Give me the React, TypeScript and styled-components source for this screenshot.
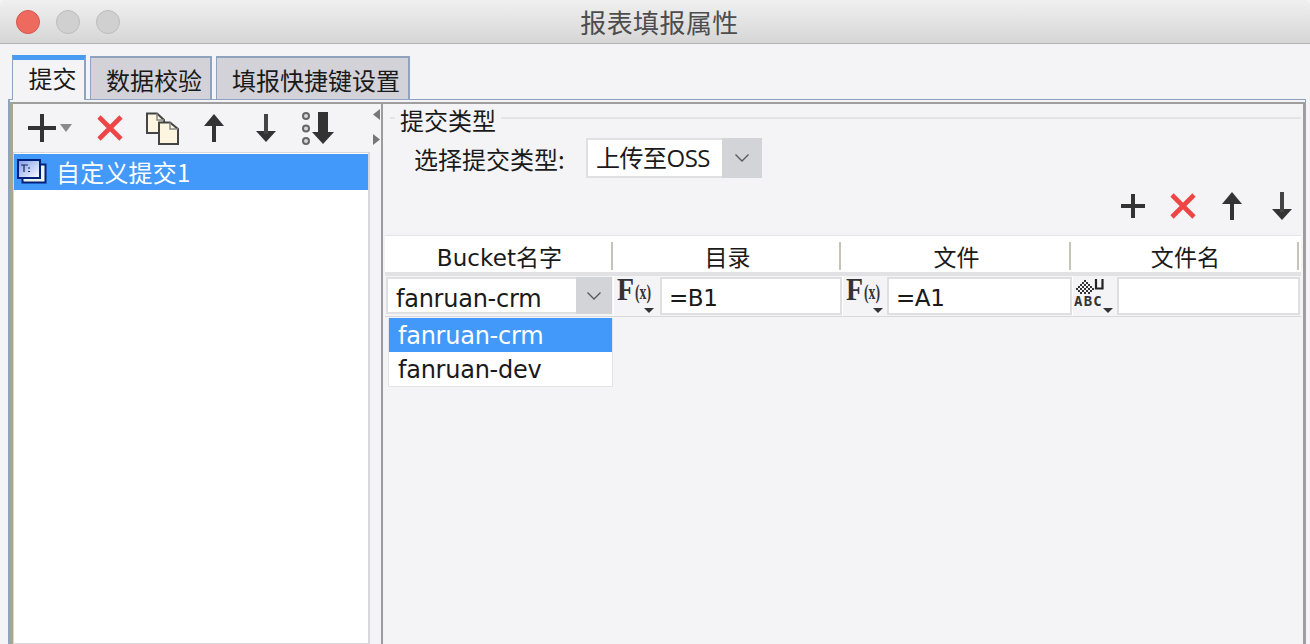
import React from 'react';
import styled, { createGlobalStyle } from 'styled-components';

const Global = createGlobalStyle`
  html, body { margin: 0; padding: 0; background: #f4f4f7; overflow: hidden; }
  * { box-sizing: border-box; }
`;

const FONT = `"DejaVu Sans", "Noto Sans CJK SC", sans-serif`;

const Window = styled.div`
  width: 1310px; height: 644px; display: flex; flex-direction: column; overflow: hidden;
  background: #f4f4f7; font-family: ${FONT}; color: #1a1a1a; font-size: 24px;
`;
const TitleBar = styled.header`
  height: 44px; flex: none; display: grid; grid-template-columns: 1fr auto 1fr; align-items: center;
  background: linear-gradient(#f0f0f0, #d6d6d6); border-bottom: 1px solid #b4b4b4;
  border-radius: 6px 6px 0 0;
`;
const Lights = styled.div`display: flex; gap: 16px; padding-left: 16px;`;
const Light = styled.span<{ $active?: boolean }>`
  width: 24px; height: 24px; border-radius: 50%;
  background: ${p => (p.$active ? '#ee6a5f' : '#d0d0d0')};
  border: 1px solid ${p => (p.$active ? '#d6574d' : '#bcbcbc')};
`;
const Title = styled.h1`
  margin: 0 0 0 9px; font-size: 26px; line-height: 44px; font-weight: 400; color: #4d4d4d; letter-spacing: 0.4px;
  font-family: "Noto Sans CJK SC", sans-serif;
`;
const TabStrip = styled.div`
  flex: none; height: 55px; padding: 11px 0 0 12px; display: flex; gap: 4px; align-items: flex-end;
`;
const Tab = styled.div<{ $active?: boolean; $w: number; $pl: number }>`
  width: ${p => p.$w}px;
  height: ${p => (p.$active ? 45 : 43)}px;
  margin-bottom: ${p => (p.$active ? -1 : 0)}px;
  position: relative; z-index: ${p => (p.$active ? 2 : 0)};
  padding-left: ${p => p.$pl}px;
  background: ${p => (p.$active ? '#f4f4f7' : '#d2d2d8')};
  border: 1px solid #8fa3bf; border-bottom: none;
  border-top: ${p => (p.$active ? '5px solid #4a9bf2' : '2px solid #8fa3bf')};
  border-right-width: 2px;
  text-align: center; line-height: ${p => (p.$active ? 36 : 44)}px; white-space: nowrap;
  font-family: "Noto Sans CJK SC", sans-serif;
`;
const Pane = styled.div`
  flex: 1; min-height: 0; margin: 0 4px 0 8px; border: solid #8fa3bf; border-width: 1px 1px 0 2px;
  padding-top: 2px; display: flex;
`;
const PaneInner = styled.div`
  flex: 1; min-width: 0; display: flex; border: solid #a6a697; border-width: 2px 2px 0 3px;
  border-top-color: #9e9e9e; border-right-color: #9e9e9e;
`;
const LeftPanel = styled.section`
  width: 357px; flex: none; display: flex; flex-direction: column;
`;
const LeftToolbar = styled.div`
  height: 48px; flex: none; display: flex; align-items: center; padding-left: 15px;
`;
const ToolIcon = styled.svg<{ $ml?: number }>`
  display: block; flex: none; margin-left: ${p => p.$ml ?? 0}px;
`;
const List = styled.div`
  flex: 1; background: #fff; border: 1px solid #d8d8dc; border-right-width: 2px; padding-top: 1px;
`;
const ListRow = styled.div`
  height: 36px; background: #4299fa; color: #fff; display: flex; align-items: center; padding: 0 0 2px 3px; gap: 9px;
  font-family: "Noto Sans CJK SC", sans-serif; font-size: 24px; letter-spacing: 0.2px;
`;
const Splitter = styled.div`
  width: 13px; flex: none; border-right: 2px solid #9c9c9c; padding: 5px 0 0 3px;
  display: flex; flex-direction: column; gap: 14px;
`;
const RightPanel = styled.section`
  flex: 1; min-width: 0; display: flex; flex-direction: column; padding-left: 2px;
`;
const Legend = styled.div`
  height: 30px; flex: none; display: flex; align-items: center; margin-left: 5px; margin-right: 2px; gap: 5px;
  font-family: "Noto Sans CJK SC", sans-serif;
`;
const LegendRule = styled.span<{ $w?: number }>`
  height: 2px; background: #e4e4e7; margin-top: -2px;
  ${p => (p.$w ? `width: ${p.$w}px; flex: none;` : 'flex: 1;')}
`;
const TypeRow = styled.div`
  height: 40px; flex: none; margin-top: 4px; display: flex; align-items: center; padding-left: 29px; gap: 21px;
  font-family: "Noto Sans CJK SC", sans-serif;
`;
const TypeLabel = styled.span`width: 151px; flex: none; white-space: nowrap;`;
const Combo = styled.div<{ $w: number }>`
  width: ${p => p.$w}px; height: 100%; display: flex; flex: none;
  background: #fff; border: 2px solid #e0e0e3; border-right: none;
  font-family: ${FONT};
`;
const ComboText = styled.span`
  flex: 1; min-width: 0; padding-left: 8px; white-space: nowrap; line-height: 40px; letter-spacing: -0.25px;
`;
const OssText = styled(ComboText)`
  font-family: "Open Sans", "Noto Sans CJK SC", sans-serif; line-height: 36px; letter-spacing: -0.5px;
`;
const ComboArrow = styled.span<{ $w: number }>`
  width: ${p => p.$w}px; flex: none; background: #d3d4d8; display: flex; align-items: center; justify-content: center;
  margin: -2px 0;
`;
const RightToolbar = styled.div`
  height: 28px; flex: none; margin-top: 14px; display: flex; align-items: center; justify-content: flex-end; padding-right: 11px;
`;
const TableWrap = styled.div`
  margin-top: 15px; margin-right: 2px; position: relative;
`;
const HeaderRow = styled.div`
  height: 37px; display: grid; grid-template-columns: 228px 228px 230px 228px 1fr; background: #fff; border-top: 1px solid #e4e4e7;
`;
const HeadCell = styled.div`
  text-align: center; line-height: 44px; height: 36px; position: relative; font-size: 23px; letter-spacing: 0.1px; padding-left: 1px;
  font-family: ${FONT}; white-space: nowrap;
  &::after {
    content: ''; position: absolute; right: 0; top: 6px; bottom: 2px; width: 2px; background: #c6c4b6;
  }
`;
const HeadEnd = styled.div``;
const Band = styled.div`height: 4px; background: #e2e2e5;`;
const BodyRow = styled.div`
  height: 41px; display: flex; border-bottom: 1px solid #d8d8dc; padding: 0 3px 0 1px;
`;
const BucketCell = styled.div`
  width: 227px; flex: none; position: relative; padding: 1px 0 2px;
`;
const IconCell = styled.div<{ $w: number }>`
  width: ${p => p.$w}px; flex: none; display: flex; border-left: 1px solid #fff;
`;
const FxButton = styled.div<{ $w: number }>`width: ${p => p.$w}px; flex: none; padding: 2px 0 0 1px;`;
const DrawnIcon = styled.svg`display: block; margin-top: -8px; overflow: visible;`;
const ValueInput = styled.div`
  flex: 1; min-width: 0; background: #fff; border: 2px solid #dfdfe2; padding-left: 7px; line-height: 38px; font-size: 23px;
  margin: 1px 0; white-space: nowrap; letter-spacing: -0.4px;
`;
const Dropdown = styled.ul`
  position: absolute; left: 2px; top: 42px; width: 225px; margin: 0; padding: 0; list-style: none;
  background: #fff; border: 1px solid #e4e4e7; border-top: none; z-index: 3; letter-spacing: -0.25px;
`;
const Option = styled.li<{ $on?: boolean }>`
  height: 34px; line-height: 37px; padding-left: 9px;
  background: ${p => (p.$on ? '#4299fa' : 'transparent')};
  color: ${p => (p.$on ? '#fff' : '#1a1a1a')};
`;

const Chevron = () => (
  <svg width="16" height="10" viewBox="0 0 16 10">
    <path d="M1.5 1.5 L8 8 L14.5 1.5" fill="none" stroke="#55575c" strokeWidth="1.3" />
  </svg>
);
const Plus = ({ size = 28, ml = 0, w = 4 }: { size?: number; ml?: number; w?: number }) => (
  <ToolIcon $ml={ml} width={size} height={size} viewBox={`0 0 ${size} ${size}`}>
    <path d={`M0 ${size / 2} H${size} M${size / 2} 0 V${size}`} stroke="#333" strokeWidth={w} />
  </ToolIcon>
);
const Cross = ({ ml = 0 }: { ml?: number }) => (
  <ToolIcon $ml={ml} width="26" height="26" viewBox="0 0 26 26">
    <path d="M2 2 L24 24 M24 2 L2 24" stroke="#ee4545" strokeWidth="4.6" />
  </ToolIcon>
);
const Up = ({ ml = 0 }: { ml?: number }) => (
  <ToolIcon $ml={ml} width="20" height="28" viewBox="0 0 20 28">
    <path d="M10 0 L20 12 H0 Z" fill="#333" />
    <rect x="8" y="8" width="4" height="20" fill="#333" />
  </ToolIcon>
);
const Down = ({ ml = 0 }: { ml?: number }) => (
  <ToolIcon $ml={ml} width="20" height="28" viewBox="0 0 20 28">
    <path d="M10 28 L20 17 H0 Z" fill="#333" />
    <rect x="8" y="0" width="4" height="20" fill="#444" />
  </ToolIcon>
);
const Caret = ({ ml = 0 }: { ml?: number }) => (
  <ToolIcon $ml={ml} width="12" height="8" viewBox="0 0 12 8">
    <path d="M0 0 H12 L6 8 Z" fill="#8a8a8a" />
  </ToolIcon>
);
const CopyIcon = ({ ml = 0 }: { ml?: number }) => (
  <ToolIcon $ml={ml} width="33" height="33" viewBox="0 0 33 33">
    <path d="M1 1.5 H11 L18 8 V21 H1 Z" fill="#fdf5e0" stroke="#444" strokeWidth="2" />
    <path d="M13 10.5 H24 L32 17 V32 H13 Z" fill="#fdf5e0" stroke="#444" strokeWidth="2" />
    <path d="M11 1.5 V8 H18 M24 10.5 V17 H32" fill="none" stroke="#888" strokeWidth="1.5" />
  </ToolIcon>
);
const DragDown = ({ ml = 0 }: { ml?: number }) => (
  <ToolIcon $ml={ml} width="34" height="34" viewBox="0 0 34 34">
    <g fill="#d8d8d8" stroke="#666" strokeWidth="2">
      <circle cx="5" cy="5" r="3" /><circle cx="5" cy="17.5" r="3" /><circle cx="5" cy="30" r="3" />
    </g>
    <rect x="17" y="1" width="10" height="21" fill="#333" />
    <path d="M11 21 H33 L22 33 Z" fill="#333" />
  </ToolIcon>
);
const ListIcon = () => (
  <svg width="30" height="25" viewBox="0 0 30 25" style={{ flex: 'none' }}>
    <defs>
      <linearGradient id="winG" x1="0" y1="0" x2="1" y2="1">
        <stop offset="0" stopColor="#7d9ce8" /><stop offset="1" stopColor="#ffffff" />
      </linearGradient>
    </defs>
    <rect x="5.5" y="5.5" width="23" height="18" fill="#eef6e6" stroke="#00207f" strokeWidth="2" />
    <rect x="1" y="1" width="22" height="18" fill="url(#winG)" stroke="#00207f" strokeWidth="2" />
    <path d="M4 6 H11 M7 6 V13 M11 9 H13 M11 12.5 H13" stroke="#14265f" strokeWidth="1.2" />
  </svg>
);
const FxIcon = () => (
  <DrawnIcon width="44" height="46" viewBox="0 -8 44 46">
    <text x="2" y="22" fontFamily="'Liberation Serif', serif" fontWeight="700" fontSize="32" fill="#333" textLength="17" lengthAdjust="spacingAndGlyphs">F</text>
    <text x="20" y="21" fontFamily="'Liberation Serif', serif" fontSize="22" fontWeight="700" fill="#333" textLength="16" lengthAdjust="spacingAndGlyphs">(x)</text>
    <path d="M29 30 H39 L34 35 Z" fill="#333" />
  </DrawnIcon>
);
const DITHER: [number, number][] = [];
for (let y = 2; y <= 15; y += 2) {
  for (let x = 0; x <= 18; x += 2) {
    if ((x / 2 + y / 2) % 2 === 0 && Math.abs(x - 9) + Math.abs(y - 10) <= 10) DITHER.push([x, y]);
  }
}
const AbcIcon = () => (
  <DrawnIcon width="44" height="46" viewBox="0 -8 44 46">
    <g fill="#333">
      {DITHER.map(([x, y]) => <rect key={`${x}-${y}`} x={x} y={y} width="2" height="2" />)}
    </g>
    <path d="M22 1 V10.5 H28.5 V1" fill="none" stroke="#222" strokeWidth="2.2" />
    <text x="0" y="28" fontFamily="'DejaVu Sans Mono', monospace" fontWeight="700" fontSize="14" letterSpacing="1.2" fill="#333">ABC</text>
    <path d="M29 30 H39 L34 35 Z" fill="#333" />
  </DrawnIcon>
);
const Tri = ({ dir }: { dir: 'l' | 'r' }) => (
  <svg width="7" height="11" viewBox="0 0 7 11" style={{ display: 'block' }}>
    <path d={dir === 'l' ? 'M0 5.5 L7 0 V11 Z' : 'M0 0 L7 5.5 L0 11 Z'} fill="#777" />
  </svg>
);

export default function App() {
  return (
    <Window>
      <Global />
      <TitleBar>
        <Lights>
          <Light $active />
          <Light />
          <Light />
        </Lights>
        <Title>报表填报属性</Title>
        <span />
      </TitleBar>
      <TabStrip>
        <Tab $active $w={74} $pl={8}>提交</Tab>
        <Tab $w={122} $pl={7}>数据校验</Tab>
        <Tab $w={194} $pl={7}>填报快捷键设置</Tab>
      </TabStrip>
      <Pane>
        <PaneInner>
          <LeftPanel>
            <LeftToolbar>
              <Plus />
              <Caret ml={4} />
              <Cross ml={25} />
              <CopyIcon ml={23} />
              <Up ml={25} />
              <Down ml={32} />
              <DragDown ml={25} />
            </LeftToolbar>
            <List>
              <ListRow>
                <ListIcon />
                <span>自定义提交1</span>
              </ListRow>
            </List>
          </LeftPanel>
          <Splitter>
            <Tri dir="l" />
            <Tri dir="r" />
          </Splitter>
          <RightPanel>
            <Legend>
              <LegendRule $w={5} />
              <span>提交类型</span>
              <LegendRule />
            </Legend>
            <TypeRow>
              <TypeLabel>选择提交类型:</TypeLabel>
              <Combo $w={176}>
                <OssText>上传至OSS</OssText>
                <ComboArrow $w={40}><Chevron /></ComboArrow>
              </Combo>
            </TypeRow>
            <RightToolbar>
              <Plus size={24} />
              <Cross ml={25} />
              <Up ml={26} />
              <Down ml={30} />
            </RightToolbar>
            <TableWrap>
              <HeaderRow>
                <HeadCell>Bucket名字</HeadCell>
                <HeadCell>目录</HeadCell>
                <HeadCell>文件</HeadCell>
                <HeadCell>文件名</HeadCell>
                <HeadEnd />
              </HeaderRow>
              <Band />
              <BodyRow>
                <BucketCell>
                  <Combo $w={226}>
                    <ComboText>fanruan-crm</ComboText>
                    <ComboArrow $w={36}><Chevron /></ComboArrow>
                  </Combo>
                  <Dropdown>
                    <Option $on>fanruan-crm</Option>
                    <Option>fanruan-dev</Option>
                  </Dropdown>
                </BucketCell>
                <IconCell $w={229}>
                  <FxButton $w={46}><FxIcon /></FxButton>
                  <ValueInput>=B1</ValueInput>
                </IconCell>
                <IconCell $w={230}>
                  <FxButton $w={44}><FxIcon /></FxButton>
                  <ValueInput>=A1</ValueInput>
                </IconCell>
                <IconCell $w={228}>
                  <FxButton $w={44}><AbcIcon /></FxButton>
                  <ValueInput />
                </IconCell>
              </BodyRow>
            </TableWrap>
          </RightPanel>
        </PaneInner>
      </Pane>
    </Window>
  );
}
